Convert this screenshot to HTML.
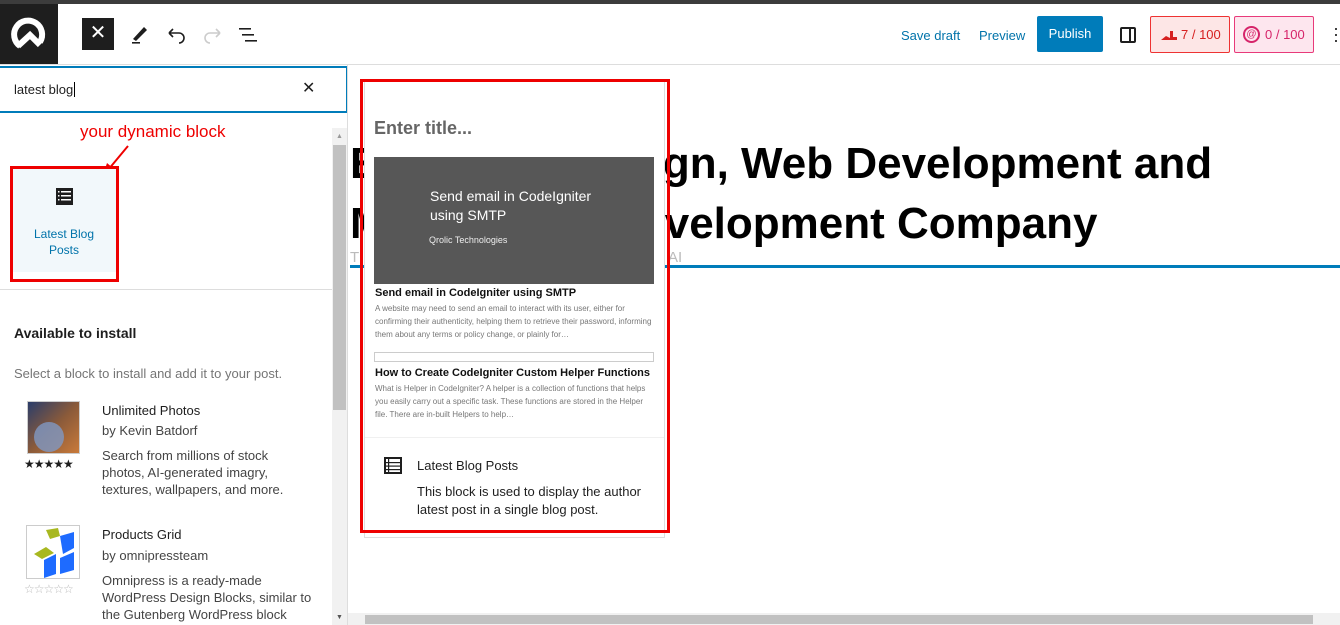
<!DOCTYPE html>
<html><head><meta charset="utf-8"><style>
*{margin:0;padding:0;box-sizing:border-box}
body{width:1340px;height:625px;overflow:hidden;background:#fff;font-family:"Liberation Sans",sans-serif;position:relative;color:#1e1e1e}
.a{position:absolute}
</style></head><body>
<div class="a" style="left:0;top:0;width:1340px;height:4px;background:#3c3c3c"></div>
<div class="a" style="left:0;top:4px;width:58px;height:61px;background:#1e1e1e"></div>
<svg class="a" style="left:9px;top:16px" width="38" height="36" viewBox="0 0 38 36"><path d="M11 30 A14 14 0 1 1 31 26" fill="none" stroke="#fff" stroke-width="6"/><path d="M9 30 L21 19 L31 29" fill="none" stroke="#fff" stroke-width="6"/></svg>
<div class="a" style="left:0;top:64px;width:1340px;height:1px;background:#ddd"></div>
<div class="a" style="left:82px;top:18px;width:32px;height:32px;background:#1e1e1e;color:#fff;font-size:20px;text-align:center;line-height:31px">✕</div>
<svg class="a" style="left:128px;top:22px" width="24" height="24"><path d="M5 17 L16 5 L19 8 L8 19 Z" fill="#1e1e1e"/><rect x="4" y="20" width="8" height="1.6" fill="#1e1e1e"/></svg>
<svg class="a" style="left:165px;top:22px" width="24" height="24" fill="none" stroke="#1e1e1e" stroke-width="1.6"><path d="M4 11 H14 A5 5 0 0 1 14 21 M4 11 L8 7 M4 11 L8 15"/></svg>
<svg class="a" style="left:200px;top:22px" width="24" height="24" fill="none" stroke="#ccc" stroke-width="1.6"><path d="M20 11 H10 A5 5 0 0 0 10 21 M20 11 L16 7 M20 11 L16 15"/></svg>
<svg class="a" style="left:236px;top:22px" width="24" height="24" fill="#1e1e1e"><rect x="3" y="6" width="12" height="1.6"/><rect x="6" y="12" width="12" height="1.6"/><rect x="9" y="18" width="12" height="1.6"/></svg>
<div class="a" style="left:901px;top:28px;font-size:13px;color:#0073aa">Save draft</div>
<div class="a" style="left:979px;top:28px;font-size:13px;color:#0073aa">Preview</div>
<div class="a" style="left:1037px;top:16px;width:66px;height:36px;background:#007cba;border-radius:2px;color:#fff;font-size:13px;text-align:center;line-height:36px">Publish</div>
<div class="a" style="left:1120px;top:27px;width:16px;height:16px;border:2px solid #1e1e1e;border-radius:2px"><div style="position:absolute;right:3px;top:0;width:2px;height:12px;background:#1e1e1e"></div></div>
<div class="a" style="left:1150px;top:16px;width:80px;height:37px;border:1px solid #e33;background:#fde6e6;border-radius:2px;color:#d62020;font-size:13px;line-height:35px;padding-left:30px">7 / 100</div>
<svg class="a" style="left:1160px;top:28px" width="18" height="14"><path d="M1 12 L6 8 L10 10 L10 3 L13 3 L13 9 L17 9 L17 12 Z" fill="#d62020"/></svg>
<div class="a" style="left:1234px;top:16px;width:80px;height:37px;border:1px solid #e83a7a;background:#fde6ee;border-radius:2px;color:#d6246a;font-size:13px;line-height:35px;padding-left:30px">0 / 100</div>
<div class="a" style="left:1243px;top:26px;width:17px;height:17px;border:2px solid #d6246a;border-radius:50%;font-size:10px;color:#d6246a;text-align:center;line-height:13px">@</div>
<div class="a" style="left:1333px;top:25px;font-size:18px;line-height:6px;color:#1e1e1e">·<br>·<br>·</div>
<!-- sidebar -->
<div class="a" style="left:0;top:66px;width:348px;height:47px;border:2px solid #007cba;border-left:none"></div>
<div class="a" style="left:14px;top:82px;font-size:13px;color:#1e1e1e">latest blog<span style="border-left:1px solid #000;margin-left:1px"></span></div>
<div class="a" style="left:302px;top:78px;font-size:16px">✕</div>
<div class="a" style="left:347px;top:65px;width:1px;height:560px;background:#ddd"></div>
<div class="a" style="left:332px;top:128px;width:15px;height:497px;background:#f1f1f1"></div>
<div class="a" style="left:333px;top:145px;width:13px;height:265px;background:#c1c1c1"></div>
<div class="a" style="left:336px;top:133px;font-size:7px;color:#999">▲</div>
<div class="a" style="left:336px;top:614px;font-size:7px;color:#555">▼</div>
<div class="a" style="left:80px;top:122px;font-size:17px;color:#e00">your dynamic block</div>
<svg class="a" style="left:100px;top:142px" width="34" height="34"><path d="M28 4 L8 28" stroke="#e00" stroke-width="2"/><path d="M3 33 L7 21 L14 27 Z" fill="#e00"/></svg>
<div class="a" style="left:12px;top:168px;width:105px;height:104px;background:#f2f8fb"></div>
<div class="a" style="left:10px;top:166px;width:109px;height:116px;border:3px solid #e00"></div>
<svg class="a" style="left:55px;top:187px" width="20" height="20"><rect x="1" y="1" width="17" height="17" fill="#1e1e1e"/><g fill="#fff"><rect x="3" y="4" width="1.5" height="1.5"/><rect x="6" y="4" width="10" height="1.5"/><rect x="3" y="8" width="1.5" height="1.5"/><rect x="6" y="8" width="10" height="1.5"/><rect x="3" y="12" width="1.5" height="1.5"/><rect x="6" y="12" width="10" height="1.5"/></g></svg>
<div class="a" style="left:14px;top:226px;width:100px;text-align:center;font-size:12px;color:#0073aa;line-height:16px">Latest Blog<br>Posts</div>
<div class="a" style="left:0;top:289px;width:332px;height:1px;background:#ddd"></div>
<div class="a" style="left:14px;top:325px;font-size:14px;font-weight:bold;color:#1e1e1e">Available to install</div>
<div class="a" style="left:14px;top:366px;font-size:13px;color:#757575">Select a block to install and add it to your post.</div>
<div class="a" style="left:27px;top:401px;width:53px;height:53px;background:linear-gradient(135deg,#2a3d6a,#8a5a3a 50%,#c97a3a);border:1px solid #ccc"><div style="position:absolute;left:6px;top:20px;width:30px;height:30px;border-radius:50%;background:#7f98c4;opacity:.8"></div></div>
<div class="a" style="left:24px;top:457px;font-size:12px;letter-spacing:-1px;color:#1e1e1e">★★★★★</div>
<div class="a" style="left:102px;top:402px;font-size:13px;line-height:17px;color:#1e1e1e">Unlimited Photos</div>
<div class="a" style="left:102px;top:423px;font-size:13px;color:#444">by Kevin Batdorf</div>
<div class="a" style="left:102px;top:447px;font-size:13px;line-height:17px;color:#444;width:200px">Search from millions of stock photos, AI-generated imagry, textures, wallpapers, and more.</div>
<div class="a" style="left:26px;top:525px;width:54px;height:54px;border:1px solid #ccc;background:#fff"></div>
<svg class="a" style="left:30px;top:528px" width="46" height="50"><path d="M16 2 L28 0 L30 8 L20 11 Z" fill="#a8b820"/><path d="M4 26 L16 19 L24 25 L12 31 Z" fill="#a8b820"/><path d="M30 8 L44 4 L44 20 L33 26 Z" fill="#1e6bff"/><path d="M14 32 L26 26 L26 46 L14 50 Z" fill="#1e6bff"/><path d="M30 30 L44 24 L44 42 L30 46 Z" fill="#1e6bff"/></svg>
<div class="a" style="left:24px;top:582px;font-size:12px;letter-spacing:-1px;color:#bbb">☆☆☆☆☆</div>
<div class="a" style="left:102px;top:527px;font-size:13px;color:#1e1e1e">Products Grid</div>
<div class="a" style="left:102px;top:548px;font-size:13px;color:#444">by omnipressteam</div>
<div class="a" style="left:102px;top:572px;font-size:13px;line-height:17px;color:#444;width:210px">Omnipress is a ready-made WordPress Design Blocks, similar to the Gutenberg WordPress block</div>
<!-- canvas -->
<div class="a" style="left:350px;top:134px;font-size:44px;font-weight:bold;line-height:60px;color:#000;white-space:nowrap">E<span style="letter-spacing:-2.4px">xpert Web Desi</span>gn, Web Development and<br>M<span style="letter-spacing:0.9px">obile App De</span>velopment Company</div>
<div class="a" style="left:350px;top:249px;font-size:15px;color:#bbb">T</div>
<div class="a" style="left:668px;top:249px;font-size:15px;color:#bbb">AI</div>
<div class="a" style="left:350px;top:265px;width:990px;height:3px;background:#007cba"></div>
<div class="a" style="left:348px;top:613px;width:992px;height:12px;background:#f1f1f1"></div>
<div class="a" style="left:365px;top:615px;width:948px;height:9px;background:#c1c1c1"></div>
<!-- popup -->
<div class="a" style="left:364px;top:80px;width:301px;height:458px;background:#fff;border:1px solid #ddd"></div>
<div class="a" style="left:374px;top:118px;font-size:18px;font-weight:bold;color:#666">Enter title...</div>
<div class="a" style="left:374px;top:157px;width:280px;height:127px;background:#575757"></div>
<div class="a" style="left:430px;top:187px;font-size:14px;line-height:19px;color:#fff">Send email in CodeIgniter<br>using SMTP</div>
<div class="a" style="left:429px;top:235px;font-size:9px;color:#eee">Qrolic Technologies</div>
<div class="a" style="left:375px;top:287px;font-size:11px;font-weight:bold;color:#111">Send email in CodeIgniter using SMTP</div>
<div class="a" style="left:375px;top:302px;width:280px;font-size:8px;line-height:13px;color:#777">A website may need to send an email to interact with its user, either for confirming their authenticity, helping them to retrieve their password, informing them about any terms or policy change, or plainly for…</div>
<div class="a" style="left:374px;top:352px;width:280px;height:10px;border:1px solid #ccc"></div>
<div class="a" style="left:375px;top:367px;font-size:11px;font-weight:bold;color:#111">How to Create CodeIgniter Custom Helper Functions</div>
<div class="a" style="left:375px;top:382px;width:282px;font-size:8px;line-height:13px;color:#777">What is Helper in CodeIgniter?  A helper is a collection of functions that helps you easily carry out a specific task. These functions are stored in the Helper file. There are in-built Helpers to help…</div>
<div class="a" style="left:365px;top:437px;width:299px;height:1px;background:#f0f0f0"></div>
<svg class="a" style="left:384px;top:457px" width="20" height="18"><rect x="1" y="1" width="16" height="15" fill="none" stroke="#1e1e1e" stroke-width="2"/><g fill="#1e1e1e"><rect x="2" y="5" width="14" height="1.2"/><rect x="2" y="8.5" width="14" height="1.2"/><rect x="2" y="12" width="14" height="1.2"/><rect x="4" y="2" width="1.2" height="13"/></g></svg>
<div class="a" style="left:417px;top:458px;font-size:13px;color:#1e1e1e">Latest Blog Posts</div>
<div class="a" style="left:417px;top:483px;font-size:13px;line-height:18px;color:#1e1e1e">This block is used to display the author<br>latest post in a single blog post.</div>
<div class="a" style="left:360px;top:79px;width:310px;height:454px;border:3px solid #e00"></div>
</body></html>
